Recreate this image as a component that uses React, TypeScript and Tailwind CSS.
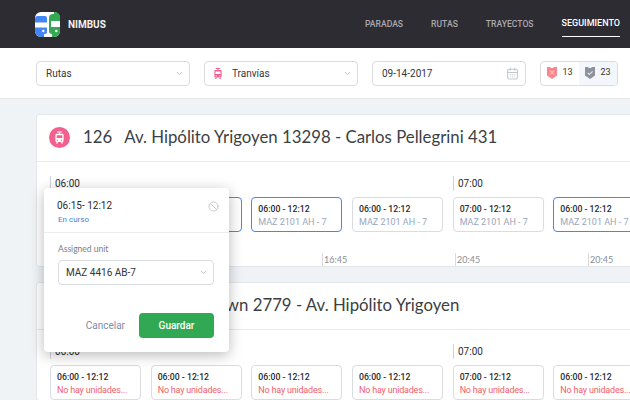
import { ChevronDown, Ban, CalendarDays } from "lucide-react";

const sans = "font-['Roboto','Liberation_Sans',sans-serif]";
const lato = "font-['Lato','Liberation_Sans',sans-serif]";

function TramIcon({ className }: { className?: string }) {
    return (
        <svg viewBox="0 0 14 20" className={className} fill="currentColor">
            <rect x="3" y="0.5" width="8" height="1.6" rx="0.5" />
            <path d="M6.2 2h1.6v2.4H6.2z" />
            <path d="M2.6 4h8.8A2 2 0 0 1 13.4 6v9a2 2 0 0 1-2 2H2.6a2 2 0 0 1-2-2V6a2 2 0 0 1 2-2zM2.6 6.4v4.4h8.8V6.4zM3.8 13a1.1 1.1 0 1 0 0 2.2 1.1 1.1 0 0 0 0-2.2zm6.4 0a1.1 1.1 0 1 0 0 2.2 1.1 1.1 0 0 0 0-2.2z" fillRule="evenodd" />
            <path d="M2.5 17h2.2l-.7 2.5H1.8zM9.3 17h2.2l.7 2.5h-2.2z" />
        </svg>
    );
}

function Logo() {
    return (
        <svg viewBox="0 0 25 25" className="w-[25px] h-[25px]">
            <rect width="25" height="25" rx="6" fill="#ffffff" />
            <path d="M0 7a3 3 0 0 1 3-3h7a2 2 0 0 1 2 2v14a2 2 0 0 1-2 2H9v3H6a6 6 0 0 1-6-6z" fill="#4285f4" />
            <rect x="0" y="10.5" width="12" height="5" fill="#ffffff" />
            <circle cx="8.3" cy="19" r="1.2" fill="#ffffff" />
            <path d="M14 6a4 4 0 0 1 4-4h1V0h1a5 5 0 0 1 5 5v14a6 6 0 0 1-6 6h-2v-3a3 3 0 0 1-3-3z" fill="#34a853" />
            <rect x="16" y="9" width="9" height="6" fill="#ffffff" />
            <circle cx="21.3" cy="19" r="1.2" fill="#ffffff" />
        </svg>
    );
}

function Shield({ color, mark }: { color: string; mark: "x" | "check" }) {
    return (
        <svg viewBox="0 0 10 12" className="w-[10px] h-[12px]">
            <path d="M0 0h3l1 1h2l1-1h3v8.5L5 12 0 8.5z" fill={color} />
            {mark === "x" ? (
                <path d="M3 3.5l4 4M7 3.5l-4 4" stroke="#ffd6d8" strokeWidth="1" fill="none" />
            ) : (
                <path d="M2.6 5.8l1.8 1.7 3.2-3.2" stroke="#e3e5ea" strokeWidth="1.1" fill="none" />
            )}
        </svg>
    );
}

function Select({ children, className }: { children: React.ReactNode; className?: string }) {
    return (
        <div className={`h-[25px] flex items-center border border-[#d9dce0] rounded-[4px] bg-white ${className}`}>
            {children}
        </div>
    );
}

function Slot({ time = "06:00 - 12:12", sub, active, empty }: { time?: string; sub: string; active?: boolean; empty?: boolean }) {
    return (
        <div className={`w-[91px] h-[35px] shrink-0 rounded-[4px] border pl-[6px] pt-[3px] flex flex-col justify-center ${active ? "border-[#4a86e8]" : "border-[#d9dce0]"}`}>
            <div className={`${sans} text-[8.7px] leading-[13px] font-medium text-[#2b2b30]`}>{time}</div>
            <div className={`${sans} text-[9px] leading-[13px] whitespace-nowrap ${empty ? "tracking-[-0.2px] text-[#f4606b]" : "text-[#98a6bc]"}`}>{sub}</div>
        </div>
    );
}

function TimeMark({ label, className }: { label: string; className: string }) {
    return (
        <div className={`h-[15px] border-l border-[#d0d3d8] pl-[4px] flex items-center shrink-0 ${className}`}>
            <span className={`${sans} text-[10px] text-[#2b2b30]`}>{label}</span>
        </div>
    );
}

function Tick({ label, className }: { label: string; className: string }) {
    return (
        <div className={`h-[13px] border-l border-[#d8dadd] pl-[1px] flex items-center shrink-0 ${className}`}>
            <span className={`${lato} text-[9px] text-[#8a8d92]`}>{label}</span>
        </div>
    );
}

function RouteCard({ code, title, empty }: { code: string; title: string; empty?: boolean }) {
    const sub = empty ? "No hay unidades..." : "MAZ 2101 AH - 7";
    return (
        <section className="ml-[36px] w-[640px] bg-white border border-[#e3e6ea] rounded-[3px] shrink-0">
            <div className="h-[47px] pb-[2px] flex items-center border-b border-[#e9ebee] pl-[12px]">
                <div className="w-[21px] h-[21px] rounded-full bg-[#f2608f] flex items-center justify-center text-white">
                    <TramIcon className="w-[9px] h-[13px]" />
                </div>
                <h2 className={`${lato} ml-[13px] text-[16.8px] text-[#3c3f44] whitespace-nowrap flex gap-[12px]`}>
                    <span>{code}</span>
                    <span>{title}</span>
                </h2>
            </div>
            <div className="pl-[13px] pt-[14px]">
                <div className="flex">
                    <TimeMark label="06:00" className="w-[403px]" />
                    <TimeMark label="07:00" className="w-[100px]" />
                </div>
                <div className="flex gap-[9.67px] mt-[6px]">
                    <Slot sub={sub} empty={empty} />
                    <Slot sub={sub} empty={empty} active={!empty} />
                    <Slot sub={sub} empty={empty} active={!empty} />
                    <Slot sub={sub} empty={empty} />
                    <Slot time="07:00 - 12:12" sub={sub} empty={empty} />
                    <Slot sub={sub} empty={empty} active={!empty} />
                </div>
                {!empty && (
                    <div className="flex mt-[21px] pl-[272px]">
                        <Tick label="16:45" className="w-[133px]" />
                        <Tick label="20:45" className="w-[133px]" />
                        <Tick label="20:45" className="w-[60px]" />
                    </div>
                )}
            </div>
        </section>
    );
}

export default function App() {
    return (
        <div className={`${sans} relative w-[630px] h-[400px] overflow-hidden bg-[#eff3f6] flex flex-col`}>
            <header className="h-[48px] bg-[#2d2c33] flex items-center justify-between pl-[35px] pr-[10px] shrink-0">
                <div className="flex items-center gap-[8px]">
                    <Logo />
                    <span className="text-[10px] font-bold text-[#f2f2f4]">NIMBUS</span>
                </div>
                <nav className="flex gap-[28px] items-center text-[8.6px] font-medium text-[#a9a9ae]">
                    <span>PARADAS</span>
                    <span>RUTAS</span>
                    <span>TRAYECTOS</span>
                    <span className="text-[9px] text-white py-[5px] border-y border-t-transparent border-b-white">SEGUIMIENTO</span>
                </nav>
            </header>

            <div className="h-[50px] bg-white border-b border-[#e6e9ec] flex items-center pl-[36px] gap-[14px] shrink-0 box-content">
                <Select className="w-[154px] pl-[9px] pr-[5px] justify-between">
                    <span className="text-[10px] text-[#33363b]">Rutas</span>
                    <ChevronDown size={9} className="text-[#a9adb3]" />
                </Select>
                <Select className="w-[154px] pl-[9px] pr-[5px]">
                    <TramIcon className="w-[8px] h-[13px] text-[#f2608f]" />
                    <span className="ml-[10px] text-[10px] text-[#33363b]">Tranvías</span>
                    <ChevronDown size={9} className="ml-auto text-[#a9adb3]" />
                </Select>
                <Select className="w-[154px] pl-[9px] pr-[6px] justify-between">
                    <span className="text-[10px] text-[#33363b]">09-14-2017</span>
                    <CalendarDays size={13} className="text-[#c4c8ce]" />
                </Select>
                <div className="h-[25px] w-[78px] flex border border-[#d9dce0] rounded-[4px] overflow-hidden">
                    <div className="flex-1 flex items-center justify-center gap-[5px]">
                        <Shield color="#f9868c" mark="x" />
                        <span className="text-[9px] text-[#33363b]">13</span>
                    </div>
                    <div className="flex-1 flex items-center justify-center gap-[5px] bg-[#f3f7fc]">
                        <Shield color="#8e929c" mark="check" />
                        <span className="text-[9px] text-[#33363b]">23</span>
                    </div>
                </div>
            </div>

            <div className="flex flex-col gap-[15px] pt-[15px]">
                <RouteCard code="126" title="Av. Hipólito Yrigoyen 13298 - Carlos Pellegrini 431" />
                <RouteCard empty code="126" title="Almirante Brown 2779 - Av. Hipólito Yrigoyen" />
            </div>

            <div className="absolute left-[44px] top-[188px] w-[185px] h-[164px] bg-white rounded-[4px] shadow-[0_3px_14px_rgba(0,0,0,0.28)] flex flex-col">
                <div className="h-[45px] border-b border-[#e9ebee] pl-[13px] pr-[10px] flex items-start justify-between pt-[11px]">
                    <div>
                        <div className="text-[10px] leading-[13px] text-[#2b2b30]">06:15- 12:12</div>
                        <div className="text-[8px] leading-[10px] ml-[1px] mt-[3px] text-[#4a7fd8]">En curso</div>
                    </div>
                    <Ban size={11} className="text-[#c3c6ca] mt-[2px]" />
                </div>
                <div className="pl-[14px] pr-[15px] pt-[10px] flex-1 flex flex-col">
                    <div className={`${lato} text-[8.5px] leading-[12px] text-[#7b7e84]`}>Assigned unit</div>
                    <Select className="w-[156px] mt-[5px] pl-[7px] pr-[5px] justify-between">
                        <span className="text-[10px] text-[#33363b]">MAZ 4416 AB-7</span>
                        <ChevronDown size={9} className="text-[#a9adb3]" />
                    </Select>
                    <div className="flex items-center justify-end mt-[28px] gap-[14px]">
                        <span className="text-[10px] text-[#7d8ea6]">Cancelar</span>
                        <div className="w-[75px] h-[25px] rounded-[4px] bg-[#31a853] flex items-center justify-center text-[10px] text-white font-medium">Guardar</div>
                    </div>
                </div>
            </div>
        </div>
    );
}
